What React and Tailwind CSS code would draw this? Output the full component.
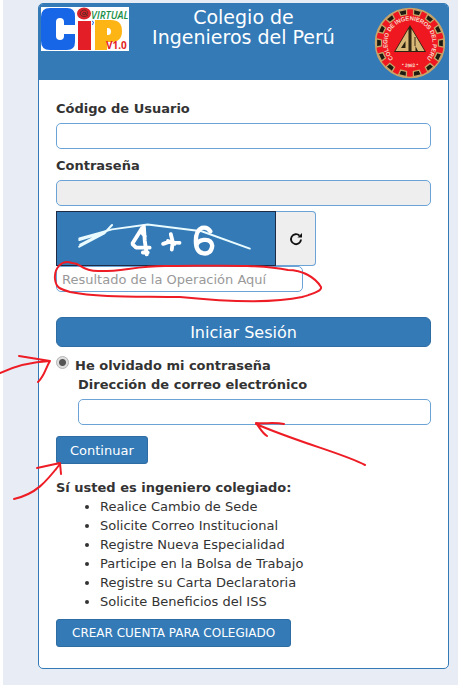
import { useState } from 'react';

const BENEFITS = [
  'Realice Cambio de Sede',
  'Solicite Correo Institucional',
  'Registre Nueva Especialidad',
  'Participe en la Bolsa de Trabajo',
  'Registre su Carta Declaratoria',
  'Solicite Beneficios del ISS',
];

const TEETH = Array.from({ length: 14 }, (_, i) => (i * 360) / 14 + 13);

function CipLogo() {
  return (
    <svg viewBox="0 0 88 44" className="w-[88px] h-11" role="img" aria-label="CIP Virtual V 1.0">
      <rect width="88" height="44" fill="#fff" />
      <path
        d="M34 18V9Q34 1 26 1H9Q0 1 0 10V34Q0 43 9 43H26Q34 43 34 35V27H23V29Q23 33 19 33T15 29V15Q15 11 19 11T23 15V18Z"
        fill="#1766e8"
      />
      <path d="M37 14H50V43H37Z" fill="#e31e26" />
      <path d="M54 13H70Q81 13 81 24T70 35H66V43H54ZM66 21V28H67Q70 28 70 24.500T67 21Z" fill="#fdb515" fillRule="evenodd" />
      <ellipse cx="43" cy="6.500" rx="7" ry="6" fill="#d9242b" />
      <path d="M47 8.500Q41 11 39 7Q40 2.500 44 3Q47.500 4 46 7.500Q44 8.500 44.500 5.500Q42 4.500 41.500 7Q43 9 44.500 6.500" fill="none" stroke="#5b2a20" strokeWidth="0.9" />
      <path d="M51 14l1.500 1-1 3" fill="none" stroke="#1766e8" strokeWidth="1" />
      <text x="50" y="12" fill="#1b9048" className="font-['Open_Sans',sans-serif] text-[10px] italic font-semibold">VIRTUAL</text>
      <text x="65" y="42" fill="#e31e26" className="font-['Open_Sans',sans-serif] text-[10px] font-bold">V1.0</text>
    </svg>
  );
}

function Seal() {
  return (
    <svg viewBox="0 0 72 72" className="w-[72px] h-[72px] justify-self-end" role="img" aria-label="Colegio de Ingenieros del Perú">
      <circle cx="36" cy="36" r="34.500" fill="#f01820" stroke="#c9a469" strokeWidth="1.500" />
      {TEETH.map((a) => (
        <path
          key={a}
          d="M32 2.500H40L39 7.500H33Z"
          fill="#1d1a12"
          stroke="#c9a469"
          strokeWidth="1.300"
          transform={`rotate(${a} 36 36)`}
        />
      ))}
      <path id="seal-top" d="M22 55A23.600 23.600 0 1 1 50 55" fill="none" />
      <path id="seal-bottom" d="M22 56A25 25 0 0 0 50 56" fill="none" />
      <g fill="#f7d9c8" className="font-['Liberation_Sans',sans-serif] font-bold">
        <text className="text-[6px]" dy="1">
          <textPath href="#seal-top" startOffset="50%" textAnchor="middle">COLEGIO DE INGENIEROS DEL PERU</textPath>
        </text>
        <text className="text-[5px]">
          <textPath href="#seal-bottom" startOffset="50%" textAnchor="middle">• 1962 •</textPath>
        </text>
      </g>
      <path d="M36 18L52 45H20Z" fill="#2a2111" />
      <path
        d="M34.500 22V44H21.500ZM31.500 34L27 41H31.500ZM37.500 22L50.500 44H44L41.500 39V44H37.500Z"
        fill="#d9b877"
        fillRule="evenodd"
      />
      <path d="M36 20V45M41 30V39" stroke="#3a2a14" strokeWidth="1" />
    </svg>
  );
}

function Captcha() {
  return (
    <div className="flex h-[55px]">
      <svg viewBox="0 0 220 55" className="w-[220px] h-[55px] border border-[#1f2a44] bg-[#337ab7]" role="img" aria-label="4 + 6">
        <g fill="none" stroke="#e9fbff" strokeLinecap="round" strokeLinejoin="round">
          <path d="M20 27.500L54 18L91 13L147 20L197 38" strokeWidth="2" />
          <path d="M20 36L46 22L54 13.500M21 34L48 20M20 29L40 23" strokeWidth="2.200" />
          <path d="M85 17L75 33L79 37L93 37M87 15L88 30L90 44M86 42L91 42M84 20L88 25" stroke="#fff" strokeWidth="4" strokeLinejoin="bevel" />
          <path d="M107 33L113 31L124 32M115 23L117 31L116 39M112 30L119 33" stroke="#fff" strokeWidth="4" />
          <path d="M156 20Q153 15 147 16.500Q141 19 141 30Q141 42 149 43Q157 44 158 35Q157 28 149 29Q143 30 142 34" stroke="#fff" strokeWidth="4.500" />
        </g>
      </svg>
      <button type="button" aria-label="Actualizar" className="w-10 flex items-center justify-center bg-[#eeeeee] border border-l-0 border-[#6ba3d6] rounded-r">
        <svg viewBox="0 0 14 14" className="w-[14px] h-[14px]">
          <path d="M10.500 3.600A5 5 0 1 0 12 7.500" fill="none" stroke="#111" strokeWidth="1.900" />
          <path d="M13 1V5.500H8.500Z" fill="#111" />
        </svg>
      </button>
    </div>
  );
}

// Hand-drawn red marks over the form
function Marks() {
  return (
    <svg viewBox="0 0 458 685" className="absolute -left-[3px] top-0 w-[458px] h-[685px] pointer-events-none" aria-hidden="true">
      <g fill="none" stroke="#ee1c25" strokeWidth="2" strokeLinecap="round" strokeLinejoin="round">
        <path d="M72 263C62 259 54 268 55 279C56 288 60 289 70 292C100 298 145 296 180 297C220 301 270 304 302 297C316 293 322 290 321 287C315 277 302 270 288 270C260 264 215 266 165 266C135 266 120 272 98 271C80 271 82 263 72 263" />
        <path d="M0 373C15 366 30 362 50 361M19 356L50 361C45 369 45 375 38 382" />
        <path d="M14 499C36 494 46 482 60 464M37 468L60 463L61 474" />
        <path d="M365 465C345 454 300 443 256 424M284 424C274 422 265 424 256 423C260 428 262 433 267 436" />
      </g>
    </svg>
  );
}

const field = 'block w-full h-[26px] px-[5px] border border-[#6ba3d6] rounded-[5px] text-[13px] outline-none placeholder:text-[#999999] placeholder:opacity-100';

export default function App() {
  const [forgot, setForgot] = useState(true);

  return (
    <div className="relative min-h-screen border-l-[3px] border-white bg-[#e8edf5] pl-[35px] pr-[9px] pt-[3px] pb-4 font-['DejaVu_Sans',Verdana,sans-serif] text-[13px] leading-[19px] text-[#333333]">
      <main className="bg-white border border-[#337ab7] rounded-[5px] overflow-hidden">
        <header className="grid grid-cols-[88px_1fr_88px] items-start h-[76px] px-[2px] pt-[3px] bg-[#337ab7]">
          <CipLogo />
          <h1 className="text-center text-[19px] leading-5 text-white">
            Colegio de
            <br />
            Ingenieros del Perú
          </h1>
          <Seal />
        </header>

        <form className="px-[17px] pt-[19px] pb-[21px]" onSubmit={(e) => e.preventDefault()}>
          <label htmlFor="usuario" className="block mb-[5px] font-bold">Código de Usuario</label>
          <input id="usuario" type="text" className={`${field} bg-white`} />

          <label htmlFor="clave" className="block mt-[7px] mb-[5px] font-bold">Contraseña</label>
          <input id="clave" type="password" readOnly className={`${field} bg-[#eeeeee] mb-[5px]`} />

          <Captcha />
          <div className="w-[247px]">
            <input type="text" aria-label="Resultado de la Operación" placeholder="Resultado de la Operación Aquí" className={`${field} bg-white`} />
          </div>

          <button type="submit" className="block w-full h-[30px] mt-[25px] bg-[#337ab7] border border-[#2e6da4] rounded-md text-white text-[16px]">
            Iniciar Sesión
          </button>

          <div className="flex items-start mt-[9px]">
            <input
              id="olvido"
              type="radio"
              checked={forgot}
              onChange={() => setForgot(true)}
              className="appearance-none w-[13px] h-[13px] mr-[6px] rounded-full border border-[#b5b5b5] bg-[#e4e4e4] bg-[radial-gradient(circle,#555555_0_3px,#dedede_4px)]"
            />
            <label htmlFor="olvido" className="font-bold">He olvidado mi contraseña</label>
          </div>
          <div className="pl-[22px]">
            <label htmlFor="correo" className="block mb-[5px] font-bold">Dirección de correo electrónico</label>
            <input id="correo" type="email" className={`${field} bg-white`} />
          </div>

          <button type="button" className="block h-7 mt-[11px] px-[13px] bg-[#337ab7] border border-[#2e6da4] rounded-[3px] text-white text-[13px]">
            Continuar
          </button>

          <p className="mt-[14px] font-bold">Sí usted es ingeniero colegiado:</p>
          <ul className="list-disc pl-11">
            {BENEFITS.map((b) => (
              <li key={b}>{b}</li>
            ))}
          </ul>

          <button type="button" className="block h-7 mt-2 px-[15px] bg-[#337ab7] border border-[#2e6da4] rounded-[3px] text-white text-[12px]">
            CREAR CUENTA PARA COLEGIADO
          </button>
        </form>
      </main>
      <Marks />
    </div>
  );
}
